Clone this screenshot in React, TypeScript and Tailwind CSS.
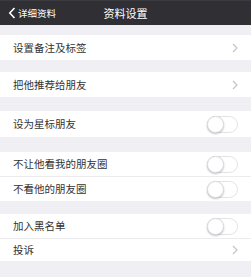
import React from "react";

const Chevron: React.FC = () => (
    <svg width="6" height="10" viewBox="0 0 6 10" className="mr-[13px]">
        <path d="M1 1l4 4-4 4" fill="none" stroke="#c4c4c8" strokeWidth="1.2" />
    </svg>
);

const Toggle: React.FC = () => (
    <div className="mr-[13px] w-[31px] h-[17px] rounded-full border border-[#e3e3e6] bg-white relative">
        <div className="absolute left-[-1px] top-[-1px] w-[17px] h-[17px] rounded-full bg-white border border-[#dcdce0] shadow-[0_1px_2px_rgba(0,0,0,0.25)]" />
    </div>
);

interface RowProps {
    label: string;
    kind: "arrow" | "toggle";
    h: string;
    divider?: boolean;
}

const Row: React.FC<RowProps> = ({ label, kind, h, divider }) => (
    <div className={`bg-white flex items-center ${h} ${divider ? "border-b border-[#ececef]" : ""}`}>
        <span className="ml-[13px] flex-1 text-[10.5px] text-[#333]">{label}</span>
        {kind === "arrow" ? <Chevron /> : <Toggle />}
    </div>
);

export default function App() {
    return (
        <div
            className="w-[251px] h-[277px] bg-[#efeff4] overflow-hidden"
            style={{ fontFamily: '"Noto Sans CJK SC", "Noto Sans", sans-serif' }}
        >
            <div className="h-[25px] bg-[#2f2f34] border-t border-t-[#3a3a40] flex items-center relative">
                <div className="flex items-center ml-[8px] text-white text-[9.5px]">
                    <svg width="8" height="12" viewBox="0 0 8 12" className="mr-[2px]">
                        <path d="M6.5 1L1.8 6l4.7 5" fill="none" stroke="#fff" strokeWidth="1.6" />
                    </svg>
                    详细资料
                </div>
                <div className="absolute left-0 right-0 text-center text-white text-[11px] pointer-events-none">
                    资料设置
                </div>
            </div>
            <div className="h-[10px]" />
            <Row label="设置备注及标签" kind="arrow" h="h-[25px]" />
            <div className="h-[12px]" />
            <Row label="把他推荐给朋友" kind="arrow" h="h-[25px]" />
            <div className="h-[14px]" />
            <Row label="设为星标朋友" kind="toggle" h="h-[26px]" />
            <div className="h-[15px]" />
            <Row label="不让他看我的朋友圈" kind="toggle" h="h-[25px]" divider />
            <Row label="不看他的朋友圈" kind="toggle" h="h-[24px]" />
            <div className="h-[13px]" />
            <Row label="加入黑名单" kind="toggle" h="h-[25px]" divider />
            <Row label="投诉" kind="arrow" h="h-[22px]" />
        </div>
    );
}
